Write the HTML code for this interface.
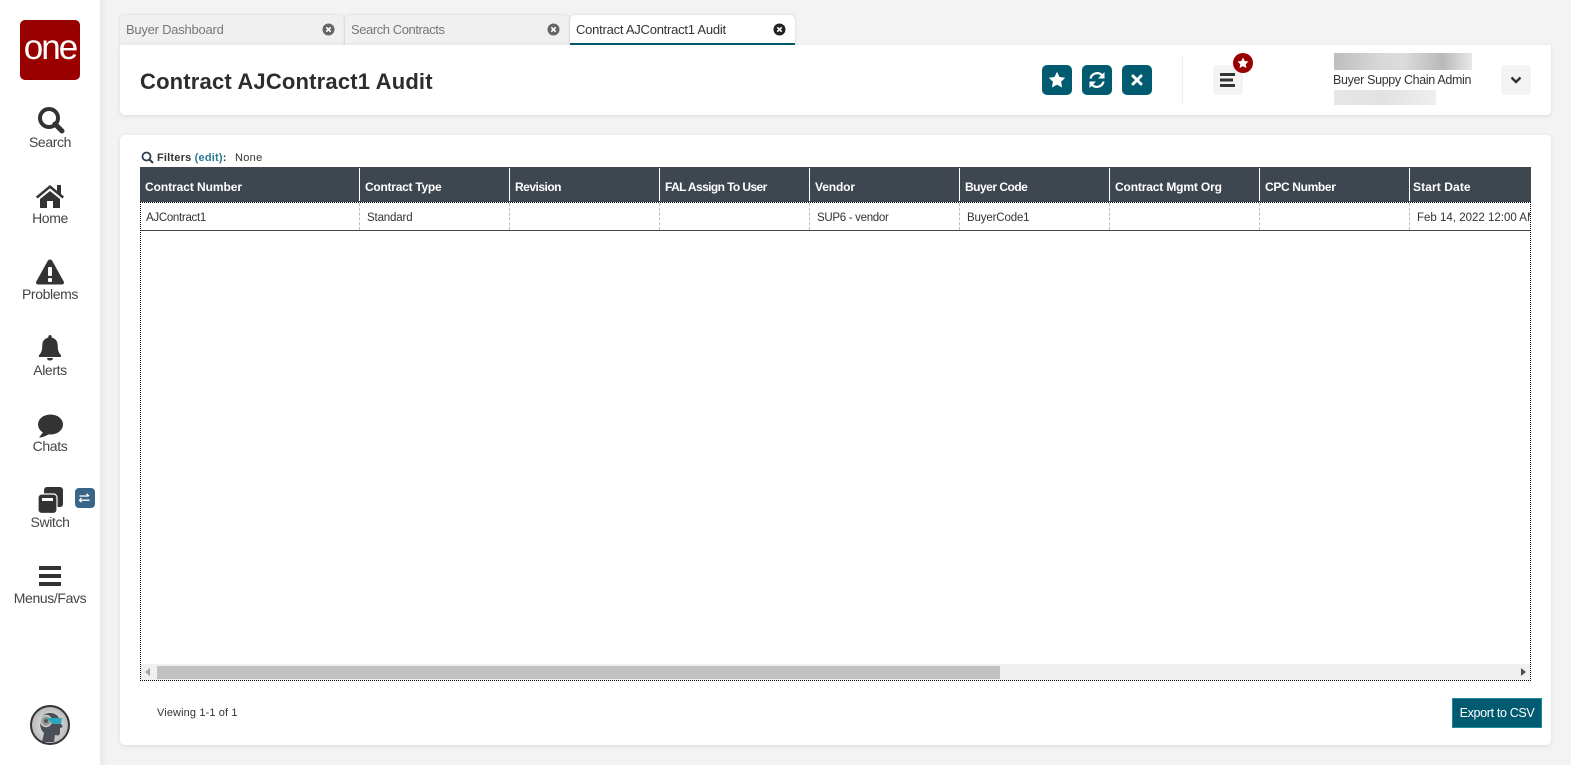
<!DOCTYPE html>
<html lang="en"><head><meta charset="utf-8"><title>Contract AJContract1 Audit</title>
<style>
*{box-sizing:border-box}
html,body{margin:0;padding:0;width:1571px;height:765px;overflow:hidden;background:#f3f3f3;font-family:"Liberation Sans",sans-serif;color:#333}
.a{position:absolute}
.t{position:absolute;white-space:nowrap;line-height:16px}
#side{left:0;top:0;width:100px;height:765px;background:#fff}
.lbl{position:absolute;left:0;width:100px;text-align:center;font-size:14px;letter-spacing:-.38px;color:#444;line-height:16px}
.tab{position:absolute;top:15px;height:30px;width:224px;background:#f0f0f0;border-radius:5px 5px 0 0;box-shadow:0 0 3px rgba(0,0,0,.13)}
.tab span{position:absolute;left:6px;top:7px;font-size:13px;color:#777;line-height:16px;letter-spacing:-.24px;white-space:nowrap}
.tab svg{position:absolute;left:202px;top:8px}
.card{position:absolute;left:120px;width:1431px;background:#fff;border-radius:5px;box-shadow:0 1px 5px rgba(0,0,0,.1)}
.btn{position:absolute;top:65px;width:30px;height:30px;border-radius:5px;background:#005b70}
.gbtn{position:absolute;top:65px;width:30px;height:30px;border-radius:5px;background:#f3f3f3}
.hs{position:absolute;top:168px;width:1px;height:33px;background:#fff}
.rs{position:absolute;top:203px;height:27px;width:0;border-left:1px dashed #bbb}
.h{position:absolute;top:179px;font-size:12px;font-weight:bold;color:#fff;line-height:16px;white-space:nowrap}
.c{position:absolute;top:210px;font-size:11.5px;color:#333;line-height:16px;white-space:nowrap}
</style></head><body>

<div class="a" id="side"></div>
<div class="a" style="left:100px;top:0;width:8px;height:765px;background:linear-gradient(90deg,#e9e9e9,#f3f3f3)"></div>

<div class="a" style="left:20px;top:20px;width:60px;height:60px;background:#990000;border-radius:5px;overflow:hidden">
<div style="position:absolute;left:0;top:11px;width:60px;text-align:center;color:#fff;font-size:35px;line-height:34px;letter-spacing:-2px">one</div></div>

<svg class="a" style="left:36px;top:105px" width="30" height="30" viewBox="0 0 30 30"><circle cx="13" cy="13" r="9" fill="none" stroke="#333" stroke-width="4"/><path d="M19 19l7 7" stroke="#333" stroke-width="5" stroke-linecap="round"/></svg>
<div class="lbl" style="top:134px">Search</div>

<svg class="a" style="left:35px;top:183px" width="30" height="26" viewBox="0 0 30 26"><path d="M1 13.500 15 2l7 5.700V2h4v9l3 2.500-1.600 2L15 5.200 2.600 15.500z" fill="#333"/><path d="M5 16 15 8l10 8v9h-7v-7h-6v7H5z" fill="#333"/></svg>
<div class="lbl" style="top:210px">Home</div>

<svg class="a" style="left:35px;top:258px" width="30" height="28" viewBox="0 0 30 28"><path d="M15 1.500c1 0 1.700.5 2.200 1.300l11.500 20.700c.8 1.500-.2 3-1.800 3H3.100c-1.600 0-2.600-1.500-1.800-3L12.800 2.800c.5-.8 1.200-1.300 2.200-1.300z" fill="#333"/><rect x="13" y="9" width="4" height="9" rx="1" fill="#fff"/><rect x="13" y="20" width="4" height="4" rx="1" fill="#fff"/></svg>
<div class="lbl" style="top:286px">Problems</div>

<svg class="a" style="left:38px;top:335px" width="24" height="26" viewBox="0 0 24 26"><path d="M12 0c1 0 1.700.8 1.700 2v.6c3.800.8 6 3.800 6 7.400 0 6 1.200 8 3.300 10.200.500.700.2 1.800-.9 1.800H1.900c-1.100 0-1.400-1.100-.9-1.800C3.100 18 4.300 16 4.300 10c0-3.600 2.200-6.600 6-7.400V2c0-1.200.7-2 1.700-2z" fill="#333"/><path d="M9 23h6c0 1.500-1.300 2.500-3 2.500S9 24.500 9 23z" fill="#333"/></svg>
<div class="lbl" style="top:362px">Alerts</div>

<svg class="a" style="left:37px;top:414px" width="27" height="24" viewBox="0 0 27 24"><ellipse cx="13.500" cy="10.500" rx="12.500" ry="10" fill="#333"/><path d="M7 17 2 23.500c3.500 0 7-1.500 10-3.500z" fill="#333"/></svg>
<div class="lbl" style="top:438px">Chats</div>

<svg class="a" style="left:37px;top:486px" width="27" height="28" viewBox="0 0 27 28"><rect x="7" y="1" width="19" height="20" rx="3" fill="#333"/><rect x="1" y="8" width="19" height="19.500" rx="3.500" fill="#333" stroke="#fff" stroke-width="1.200"/><rect x="5" y="12" width="11" height="3" fill="#fff"/></svg>
<div class="a" style="left:75px;top:488px;width:20px;height:20px;border-radius:4px;background:#3a6488"></div>
<svg class="a" style="left:78px;top:491px" width="14" height="14" viewBox="0 0 14 14"><path d="M1.500 5h9M8.500 2.800 11 5 M1.500 9.200h10M3.500 7 1.500 9.200 3.500 11.200" stroke="#fff" stroke-width="1.300" fill="none"/></svg>
<div class="lbl" style="top:514px">Switch</div>

<svg class="a" style="left:39px;top:565px" width="22" height="22" viewBox="0 0 22 22"><rect width="22" height="4" y="1" fill="#333"/><rect width="22" height="4" y="9" fill="#333"/><rect width="22" height="4" y="17" fill="#333"/></svg>
<div class="lbl" style="top:590px">Menus/Favs</div>

<svg class="a" style="left:30px;top:705px" width="40" height="40" viewBox="0 0 40 40"><defs><radialGradient id="g" cx=".5" cy=".5" r=".6"><stop offset="0" stop-color="#eee"/><stop offset=".8" stop-color="#bbb"/><stop offset="1" stop-color="#777"/></radialGradient></defs><circle cx="20" cy="20" r="19" fill="url(#g)" stroke="#333" stroke-width="2"/><path d="M10 17c0-6 5-9 10-9 6 0 10 4 10 9l3 5-3 1v5c0 2-2 3-5 2l-1 7H12l2-9c-3-3-4-6-4-11z" fill="#4a5056"/><circle cx="16" cy="16" r="5.500" fill="#999" stroke="#ccc" stroke-width="1.500"/><circle cx="16" cy="16" r="2" fill="#555"/><path d="M16 13h16l-1 6H23z" fill="#2aa7bd"/></svg>

<div class="tab" style="left:120px"><span>Buyer Dashboard</span><svg width="13" height="13" viewBox="0 0 13 13"><circle cx="6.500" cy="6.500" r="6" fill="#666"/><path d="M4.300 4.300l4.400 4.400M8.700 4.300 4.300 8.700" stroke="#fff" stroke-width="1.700"/></svg></div>
<div class="tab" style="left:345px"><span style="letter-spacing:-.43px">Search Contracts</span><svg width="13" height="13" viewBox="0 0 13 13" style="left:202px"><circle cx="6.500" cy="6.500" r="6" fill="#666"/><path d="M4.300 4.300l4.400 4.400M8.700 4.300 4.300 8.700" stroke="#fff" stroke-width="1.700"/></svg></div>
<div class="tab" style="left:570px;background:#fff;width:225px;border-bottom:2px solid #005b70"><span style="color:#333">Contract AJContract1 Audit</span><svg width="13" height="13" viewBox="0 0 13 13" style="left:203px"><circle cx="6.500" cy="6.500" r="6" fill="#222"/><path d="M4.300 4.300l4.400 4.400M8.700 4.300 4.300 8.700" stroke="#fff" stroke-width="1.700"/></svg></div>

<div class="card" style="top:45px;height:70px;border-radius:0 0 5px 5px"></div>
<div class="t" style="left:140px;top:68px;font-size:22px;line-height:28px;font-weight:bold;color:#2d2d2d;letter-spacing:.18px">Contract AJContract1 Audit</div>

<div class="btn" style="left:1042px"></div>
<svg class="a" style="left:1048px;top:71px" width="18" height="18" viewBox="0 0 18 18"><path d="M9 .8l2.500 5.200 5.700.8-4.100 4 1 5.700L9 13.800l-5.100 2.700 1-5.700-4.100-4 5.700-.8z" fill="#fff"/></svg>
<div class="btn" style="left:1082px"></div>
<svg class="a" style="left:1088px;top:71px" width="18" height="18" viewBox="0 0 18 18"><path d="M2.500 7.500A6.800 6.800 0 0 1 14 4.200" fill="none" stroke="#fff" stroke-width="2.300"/><path d="M16.500 1v6.500H10z" fill="#fff"/><path d="M15.500 10.500A6.800 6.800 0 0 1 4 13.800" fill="none" stroke="#fff" stroke-width="2.300"/><path d="M1.500 17v-6.500H8z" fill="#fff"/></svg>
<div class="btn" style="left:1122px"></div>
<svg class="a" style="left:1129px;top:72px" width="16" height="16" viewBox="0 0 16 16"><path d="M4 4l8 8M12 4l-8 8" stroke="#fff" stroke-width="3" stroke-linecap="round"/></svg>

<div class="a" style="left:1182px;top:55px;width:1px;height:50px;background:#eee"></div>
<div class="gbtn" style="left:1213px"></div>
<svg class="a" style="left:1220px;top:73px" width="15" height="15" viewBox="0 0 15 15"><rect y="0" width="15" height="3" fill="#333"/><rect y="5.500" width="13" height="3" fill="#333"/><rect y="11" width="15" height="3" fill="#333"/></svg>
<div class="a" style="left:1233px;top:53px;width:20px;height:20px;border-radius:50%;background:#990000"></div>
<svg class="a" style="left:1237px;top:57px" width="12" height="12" viewBox="0 0 18 18"><path d="M9 .8l2.500 5.200 5.700.8-4.100 4 1 5.700L9 13.800l-5.100 2.700 1-5.700-4.100-4 5.700-.8z" fill="#fff"/></svg>

<div class="a" style="left:1334px;top:53px;width:138px;height:17px;overflow:hidden"><div style="position:absolute;inset:-2px;background:linear-gradient(90deg,#bdbdbd,#d8d8d8 35%,#dcdcdc 50%,#b9b9b9 78%,#ececec 100%)"></div></div>
<div class="t" style="left:1333px;top:72px;font-size:12.500px;color:#333;letter-spacing:-.34px">Buyer Suppy Chain Admin</div>
<div class="a" style="left:1334px;top:90px;width:102px;height:15px;background:linear-gradient(90deg,#e6e6e6,#e2e2e2 50%,#efefef)"></div>
<div class="gbtn" style="left:1501px"></div>
<svg class="a" style="left:1509px;top:74px" width="14" height="12" viewBox="0 0 14 12"><path d="M2.500 3.500 7 8l4.500-4.500" fill="none" stroke="#333" stroke-width="2.500"/></svg>

<div class="card" style="top:135px;height:610px"></div>

<svg class="a" style="left:141px;top:151px" width="13" height="13" viewBox="0 0 13 13"><circle cx="5.500" cy="5.500" r="4" fill="none" stroke="#2f3f50" stroke-width="1.800"/><path d="M8.500 8.500l3.500 3.500" stroke="#2f3f50" stroke-width="2"/></svg>
<div class="t" style="left:157px;top:150px;font-size:11px;font-weight:bold;color:#333;letter-spacing:.2px">Filters <span style="color:#2b7a90">(edit)</span>:</div>
<div class="t" style="left:235px;top:150px;font-size:11px;color:#333;letter-spacing:.3px">None</div>

<div class="a" style="left:140px;top:167px;width:1391px;height:35px;background:#3e4650"></div>
<div class="hs" style="left:359px"></div><div class="hs" style="left:509px"></div><div class="hs" style="left:659px"></div><div class="hs" style="left:809px"></div><div class="hs" style="left:959px"></div><div class="hs" style="left:1109px"></div><div class="hs" style="left:1259px"></div><div class="hs" style="left:1409px"></div>
<div class="h" style="left:145px;letter-spacing:-.07px">Contract Number</div>
<div class="h" style="left:365px;letter-spacing:-.26px">Contract Type</div>
<div class="h" style="left:515px;letter-spacing:-.5px">Revision</div>
<div class="h" style="left:665px;letter-spacing:-.6px">FAL Assign To User</div>
<div class="h" style="left:815px;letter-spacing:-.13px">Vendor</div>
<div class="h" style="left:965px;letter-spacing:-.5px">Buyer Code</div>
<div class="h" style="left:1115px;letter-spacing:-.15px">Contract Mgmt Org</div>
<div class="h" style="left:1265px;letter-spacing:-.35px">CPC Number</div>
<div class="h" style="left:1413px;letter-spacing:.1px">Start Date</div>

<div class="a" style="left:140px;top:202px;width:1391px;height:479px;border:1px dotted #000"></div>
<div class="rs" style="left:359px"></div><div class="rs" style="left:509px"></div><div class="rs" style="left:659px"></div><div class="rs" style="left:809px"></div><div class="rs" style="left:959px"></div><div class="rs" style="left:1109px"></div><div class="rs" style="left:1259px"></div><div class="rs" style="left:1409px"></div>
<div class="a" style="left:141px;top:230px;width:1389px;height:1px;background:#444"></div>
<div class="c" style="left:146px;letter-spacing:-.3px">AJContract1</div>
<div class="c" style="left:367px;letter-spacing:-.15px">Standard</div>
<div class="c" style="left:817px;letter-spacing:-.3px">SUP6 - vendor</div>
<div class="c" style="left:967px;letter-spacing:-.15px">BuyerCode1</div>
<div class="a" style="left:1410px;top:203px;width:120px;height:27px;overflow:hidden"><div class="c" style="left:7px;top:7px;letter-spacing:0">Feb 14, 2022 12:00 AM</div></div>

<div class="a" style="left:141px;top:664px;width:1389px;height:16px;background:#f0f0f0"></div>
<div class="a" style="left:157px;top:666px;width:843px;height:13px;background:#c1c1c1"></div>
<svg class="a" style="left:145px;top:668px" width="6" height="8"><path d="M5 0v8L0 4z" fill="#a3a3a3"/></svg>
<svg class="a" style="left:1521px;top:668px" width="6" height="8"><path d="M0 0v8l5-4z" fill="#505050"/></svg>

<div class="t" style="left:157px;top:705px;font-size:11px;color:#333;letter-spacing:.12px">Viewing 1-1 of 1</div>
<div class="a" style="left:1452px;top:698px;width:90px;height:30px;background:#005b70;border:1px solid #1d8aa3;color:#fff;font-size:12.500px;line-height:28px;text-align:center;letter-spacing:-.34px;white-space:nowrap">Export to CSV</div>

</body></html>
